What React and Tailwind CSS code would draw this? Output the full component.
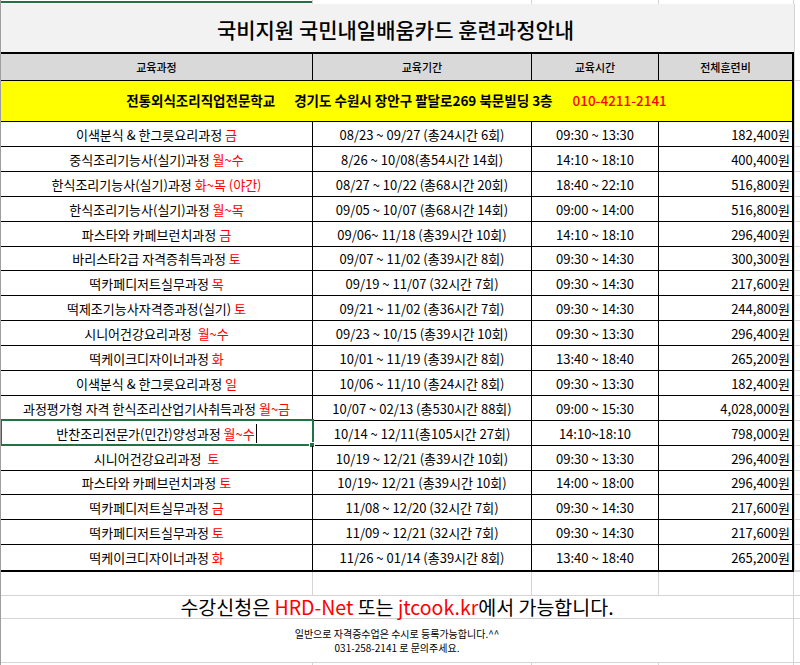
import React from 'react';

// 과정 목록 (교육과정 / 요일 / 교육기간 / 교육시간 / 전체훈련비)
const courses = [
    { name: '이색분식 & 한그릇요리과정 ', day: '금', period: '08/23 ~ 09/27 (총24시간 6회)', time: '09:30 ~ 13:30', cost: '182,400원' },
    { name: '중식조리기능사(실기)과정 ', day: '월~수', period: '8/26 ~ 10/08(총54시간 14회)', time: '14:10 ~ 18:10', cost: '400,400원' },
    { name: '한식조리기능사(실기)과정 ', day: '화~목 (야간)', period: '08/27 ~ 10/22 (총68시간 20회)', time: '18:40 ~ 22:10', cost: '516,800원' },
    { name: '한식조리기능사(실기)과정 ', day: '월~목', period: '09/05 ~ 10/07 (총68시간 14회)', time: '09:00 ~ 14:00', cost: '516,800원' },
    { name: '파스타와 카페브런치과정 ', day: '금', period: '09/06~ 11/18 (총39시간 10회)', time: '14:10 ~ 18:10', cost: '296,400원' },
    { name: '바리스타2급 자격증취득과정 ', day: '토', period: '09/07 ~ 11/02 (총39시간 8회)', time: '09:30 ~ 14:30', cost: '300,300원' },
    { name: '떡카페디저트실무과정 ', day: '목', period: '09/19 ~ 11/07 (32시간 7회)', time: '09:30 ~ 14:30', cost: '217,600원' },
    { name: '떡제조기능사자격증과정(실기) ', day: '토', period: '09/21 ~ 11/02 (총36시간 7회)', time: '09:30 ~ 14:30', cost: '244,800원' },
    { name: '시니어건강요리과정  ', day: '월~수', period: '09/23 ~ 10/15 (총39시간 10회)', time: '09:30 ~ 13:30', cost: '296,400원' },
    { name: '떡케이크디자이너과정 ', day: '화', period: '10/01 ~ 11/19 (총39시간 8회)', time: '13:40 ~ 18:40', cost: '265,200원' },
    { name: '이색분식 & 한그릇요리과정 ', day: '일', period: '10/06 ~ 11/10 (총24시간 8회)', time: '09:30 ~ 13:30', cost: '182,400원' },
    { name: '과정평가형 자격 한식조리산업기사취득과정 ', day: '월~금', period: '10/07 ~ 02/13 (총530시간 88회)', time: '09:00 ~ 15:30', cost: '4,028,000원' },
    { name: '반찬조리전문가(민간)양성과정 ', day: '월~수', period: '10/14 ~ 12/11(총105시간 27회)', time: '14:10~18:10', cost: '798,000원', selected: true },
    { name: '시니어건강요리과정  ', day: '토', period: '10/19 ~ 12/21 (총39시간 10회)', time: '09:30 ~ 13:30', cost: '296,400원' },
    { name: '파스타와 카페브런치과정 ', day: '토', period: '10/19~ 12/21 (총39시간 10회)', time: '14:00 ~ 18:00', cost: '296,400원' },
    { name: '떡카페디저트실무과정 ', day: '금', period: '11/08 ~ 12/20 (32시간 7회)', time: '09:30 ~ 14:30', cost: '217,600원' },
    { name: '떡카페디저트실무과정 ', day: '토', period: '11/09 ~ 12/21 (32시간 7회)', time: '09:30 ~ 14:30', cost: '217,600원' },
    { name: '떡케이크디자이너과정 ', day: '화', period: '11/26 ~ 01/14 (총39시간 8회)', time: '13:40 ~ 18:40', cost: '265,200원' },
];

// 행 높이 (마지막 행은 표의 굵은 아래 테두리가 대신함)
const rowClass = (i) => {
    if (i === courses.length - 1) return 'h-[25px]';
    if (i === 5 || i === 14) return 'h-[24px] border-b border-black';
    return 'h-[25px] border-b border-black';
};

const gutterRowClass = (i) => {
    if (i === courses.length - 1) return 'h-[25px]';
    if (i === 5 || i === 14) return 'h-[24px] border-b border-[#d4d4d4]';
    return 'h-[25px] border-b border-[#d4d4d4]';
};

const CourseRow = ({ course, index }) => (
    <div className={`grid grid-cols-[312px_219px_127px_133px] text-[13px] leading-none ${rowClass(index)}`}>
        <div className="relative flex items-center justify-center border-r border-black whitespace-pre">
            <span>{course.name}</span>
            <span className="text-[#ff0000]">{course.day}</span>
            {course.selected && (
                <>
                    <span className="inline-block w-[1px] h-[19px] bg-black ml-[1px]" />
                    {/* 선택된 셀 테두리 */}
                    <div className="absolute -left-[1px] -top-[2px] w-[314px] h-[27px] border-2 border-[#217346]" />
                    <div className="absolute -right-[3px] -bottom-[3px] w-[6px] h-[6px] bg-[#217346] border border-white" />
                </>
            )}
        </div>
        <div className="flex items-center justify-center border-r border-black whitespace-pre">{course.period}</div>
        <div className="flex items-center justify-center border-r border-black whitespace-pre">{course.time}</div>
        <div className="flex items-center justify-end pr-[2px]">{course.cost}</div>
    </div>
);

const App = () => {
    return (
        <div className="w-[800px] h-[665px] overflow-hidden bg-white border-l border-[#9e9e9e] text-black font-['Noto_Sans_CJK_KR',sans-serif] flex flex-col">
            {/* 윗 행 끝부분 */}
            <div className="flex h-[4px] shrink-0">
                <div className="w-[312px] border-r border-[#d4d4d4]">
                    <div className="mt-[1px] h-[2px] bg-[#217346]" />
                </div>
                <div className="w-[219px] border-r border-[#d4d4d4]" />
                <div className="w-[127px] border-r border-[#d4d4d4]" />
                <div className="w-[135px] border-r border-[#d4d4d4]" />
                <div className="w-[6px]" />
            </div>

            {/* 제목 */}
            <div className="flex h-[48px] shrink-0">
                <div className="w-[793px] bg-[#f2f2f2] flex items-center justify-center text-[21px] font-medium leading-none pt-[2px] pr-[4px]">
                    국비지원 국민내일배움카드 훈련과정안내
                </div>
                <div className="w-[6px] border-l border-[#d4d4d4]" />
            </div>

            {/* 표 */}
            <div className="flex shrink-0">
                <div className="w-[793px] border-t-2 border-r-2 border-b-2 border-black">
                    <div className="grid grid-cols-[312px_219px_127px_133px] h-[27px] border-b border-black bg-[#d9d9d9] text-[11px] font-medium leading-none">
                        <div className="flex items-center justify-center border-r border-black">교육과정</div>
                        <div className="flex items-center justify-center border-r border-black">교육기간</div>
                        <div className="flex items-center justify-center border-r border-black">교육시간</div>
                        <div className="flex items-center justify-center">전체훈련비</div>
                    </div>
                    <div className="h-[41px] border-b border-black bg-[#ffff00] flex items-center justify-center text-[13.5px] font-semibold leading-none whitespace-pre">
                        <span>전통외식조리직업전문학교</span>
                        <span className="inline-block w-[19px]" />
                        <span>경기도 수원시 장안구 팔달로269 북문빌딩 3층</span>
                        <span className="inline-block w-[20px]" />
                        <span className="text-[#ff0000] font-medium">010-4211-2141</span>
                    </div>
                    {courses.map((course, i) => (
                        <CourseRow key={i} course={course} index={i} />
                    ))}
                </div>
                <div className="w-[6px] border-l border-[#d4d4d4] flex flex-col">
                    <div className="h-[29px] border-b border-[#d4d4d4]" />
                    <div className="h-[41px]" />
                    {courses.map((_, i) => (
                        <div key={i} className={gutterRowClass(i)} />
                    ))}
                    <div className="h-[2px] bg-[#d4d4d4]" />
                </div>
            </div>

            {/* 빈 행 */}
            <div className="flex h-[24px] shrink-0 border-b border-[#d4d4d4]">
                <div className="w-[312px] border-r border-[#d4d4d4]" />
                <div className="w-[219px] border-r border-[#d4d4d4]" />
                <div className="w-[127px] border-r border-[#d4d4d4]" />
                <div className="w-[135px] border-r border-[#d4d4d4]" />
            </div>

            {/* 수강신청 안내 */}
            <div className="flex h-[23px] shrink-0 border-b border-[#d4d4d4]">
                <div className="w-[793px] border-r border-[#d4d4d4] flex items-center justify-center text-[19.5px] leading-none whitespace-pre">
                    <span>수강신청은 </span>
                    <span className="text-[#ff0000]">HRD-Net</span>
                    <span> 또는 </span>
                    <span className="text-[#ff0000]">jtcook.kr</span>
                    <span>에서 가능합니다.</span>
                </div>
            </div>

            <div className="flex h-[44px] shrink-0 border-b border-[#d4d4d4]">
                <div className="w-[793px] border-r border-[#d4d4d4] flex flex-col items-center justify-center text-[10px] leading-[14px]">
                    <p>일반으로 자격증수업은 수시로 등록가능합니다.^^</p>
                    <p>031-258-2141 로 문의주세요.</p>
                </div>
            </div>

            <div className="flex flex-1">
                <div className="w-[312px] border-r border-[#d4d4d4]" />
                <div className="w-[219px] border-r border-[#d4d4d4]" />
                <div className="w-[127px] border-r border-[#d4d4d4]" />
                <div className="w-[135px] border-r border-[#d4d4d4]" />
            </div>
        </div>
    );
};

export default App;
